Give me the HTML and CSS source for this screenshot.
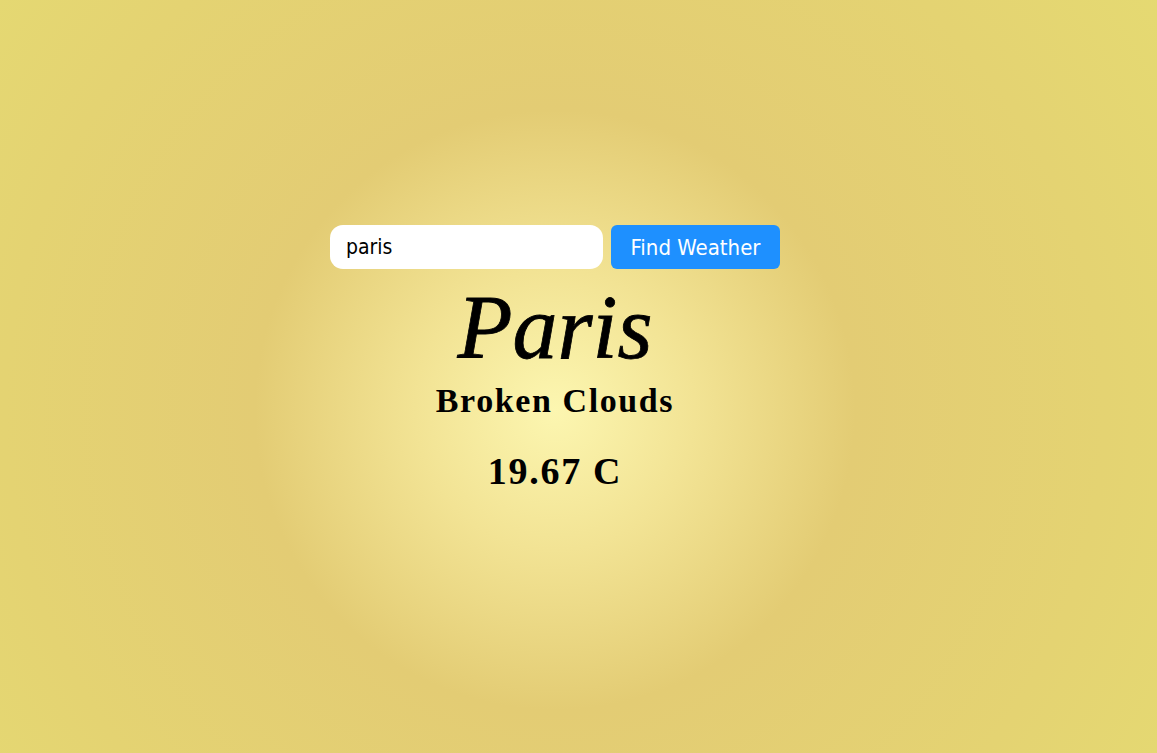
FILE: index.html
```html
<!DOCTYPE html>
<html>
<head>
<meta charset="utf-8">
<link rel="stylesheet" href="styles.css">
</head>
<body>
<main class="app">
  <form class="search">
    <input class="search-input" type="text" value="paris">
    <button class="search-btn" type="button">Find Weather</button>
  </form>
  <h1 class="city">Paris</h1>
  <h2 class="desc">Broken Clouds</h2>
  <h2 class="temp">19.67 C</h2>
</main>
</body>
</html>
```
FILE: styles.css
```css
html, body {
  margin: 0;
  padding: 0;
  height: 100%;
}
body {
  background: radial-gradient(circle at 555px 410px, #fcf6b0 0px, #f2e394 140px, #e3cc74 300px, #e4d372 550px, #e5dc72 800px);
  font-family: "Liberation Serif", serif;
}
.app {
  display: flex;
  flex-direction: column;
  align-items: center;
  padding-top: 225px;
  padding-right: 47px;
}
.search {
  display: flex;
  gap: 8px;
  margin: 0;
}
.search-input {
  box-sizing: border-box;
  width: 273px;
  height: 44px;
  border: none;
  border-radius: 13px;
  background: #fff;
  padding: 0 16px;
  font-family: "DejaVu Sans Condensed", "DejaVu Sans", sans-serif;
  font-stretch: condensed;
  font-size: 21px;
  color: #000;
  outline: none;
}
.search-btn {
  box-sizing: border-box;
  width: 169px;
  height: 44px;
  border: none;
  border-radius: 6px;
  background: #1e90ff;
  color: #fff;
  font-family: "DejaVu Sans Condensed", "DejaVu Sans", sans-serif;
  font-stretch: condensed;
  font-size: 22px;
  padding: 0;
}
.city {
  margin: 0;
  font-size: 90px;
  font-style: italic;
  font-weight: normal;
  line-height: 1;
  margin-top: 14px;
  -webkit-text-stroke: 0.8px #000;
}
.desc {
  margin: 0;
  font-size: 34px;
  font-weight: bold;
  letter-spacing: 1.6px;
  line-height: 1;
  margin-top: 11px;
}
.temp {
  margin: 0;
  font-size: 38px;
  font-weight: bold;
  letter-spacing: 1.7px;
  line-height: 1;
  margin-top: 34px;
}
```
